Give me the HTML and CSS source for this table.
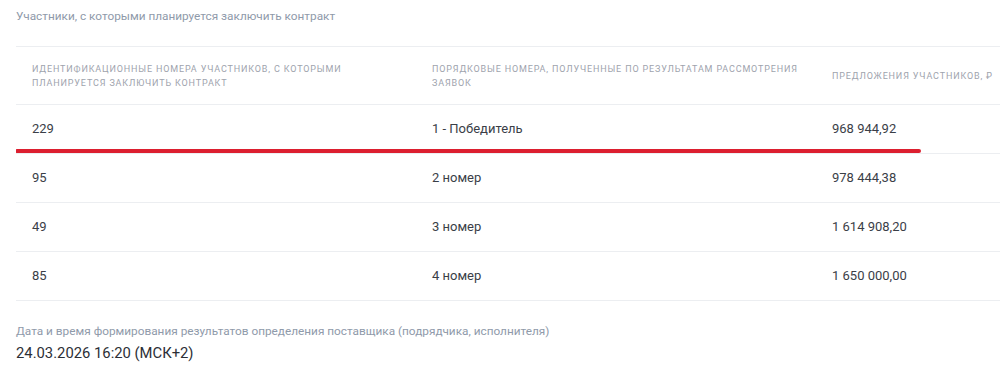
FILE: index.html
```html
<!DOCTYPE html>
<html lang="ru">
<head>
<meta charset="utf-8">
<link rel="stylesheet" href="styles.css">
</head>
<body>
<div class="page">
  <div class="section-title">Участники, с которыми планируется заключить контракт</div>
  <div class="table-wrap">
    <div class="table">
      <div class="row head">
        <div class="cell">Идентификационные номера участников, с которыми планируется заключить контракт</div>
        <div class="cell">Порядковые номера, полученные по результатам рассмотрения заявок</div>
        <div class="cell">Предложения участников, ₽</div>
      </div>
      <div class="row">
        <div class="cell">229</div>
        <div class="cell">1 - Победитель</div>
        <div class="cell">968 944,92</div>
      </div>
      <div class="row">
        <div class="cell">95</div>
        <div class="cell">2 номер</div>
        <div class="cell">978 444,38</div>
      </div>
      <div class="row">
        <div class="cell">49</div>
        <div class="cell">3 номер</div>
        <div class="cell">1 614 908,20</div>
      </div>
      <div class="row">
        <div class="cell">85</div>
        <div class="cell">4 номер</div>
        <div class="cell">1 650 000,00</div>
      </div>
    </div>
    <div class="red-mark"></div>
  </div>
  <div class="info">
    <div class="info-label">Дата и время формирования результатов определения поставщика (подрядчика, исполнителя)</div>
    <div class="info-value">24.03.2026 16:20 (МСК+2)</div>
  </div>
</div>
</body>
</html>
```
FILE: styles.css
```css
html, body {
  margin: 0;
  padding: 0;
  background: #ffffff;
  overflow: hidden;
}
body {
  font-family: Roboto, "Liberation Sans", Arial, sans-serif;
  color: #363a45;
}
.page {
  padding: 8px 0 0 16px;
}
.section-title {
  font-size: 11.8px;
  line-height: 16px;
  color: #8f9aaa;
}
.table-wrap {
  position: relative;
  margin-top: 22px;
  overflow: hidden;
}
.table {
  width: 1200px;
  border-top: 1px solid #eceef1;
}
.row {
  display: grid;
  grid-template-columns: 400px 400px 400px;
  height: 48px;
  align-items: center;
  border-bottom: 1px solid #eceef1;
}
.row.head {
  height: 57px;
}
.cell {
  padding: 0 16px;
  font-size: 13px;
  line-height: 16px;
  color: #3a3e47;
}
.row.head .cell {
  padding-right: 0;
  font-size: 9px;
  line-height: 14px;
  letter-spacing: 0.85px;
  text-transform: uppercase;
  color: #9ea3ad;
}
.red-mark {
  position: absolute;
  left: -1px;
  top: 103px;
  width: 906px;
  height: 4px;
  border-radius: 2px;
  background: #dc1f2f;
}
.info {
  margin-top: 22px;
}
.info-label {
  font-size: 11.8px;
  line-height: 16px;
  color: #8f9aaa;
}
.info-value {
  margin-top: 4px;
  font-size: 14.8px;
  line-height: 20px;
  color: #2c2f36;
}
```
